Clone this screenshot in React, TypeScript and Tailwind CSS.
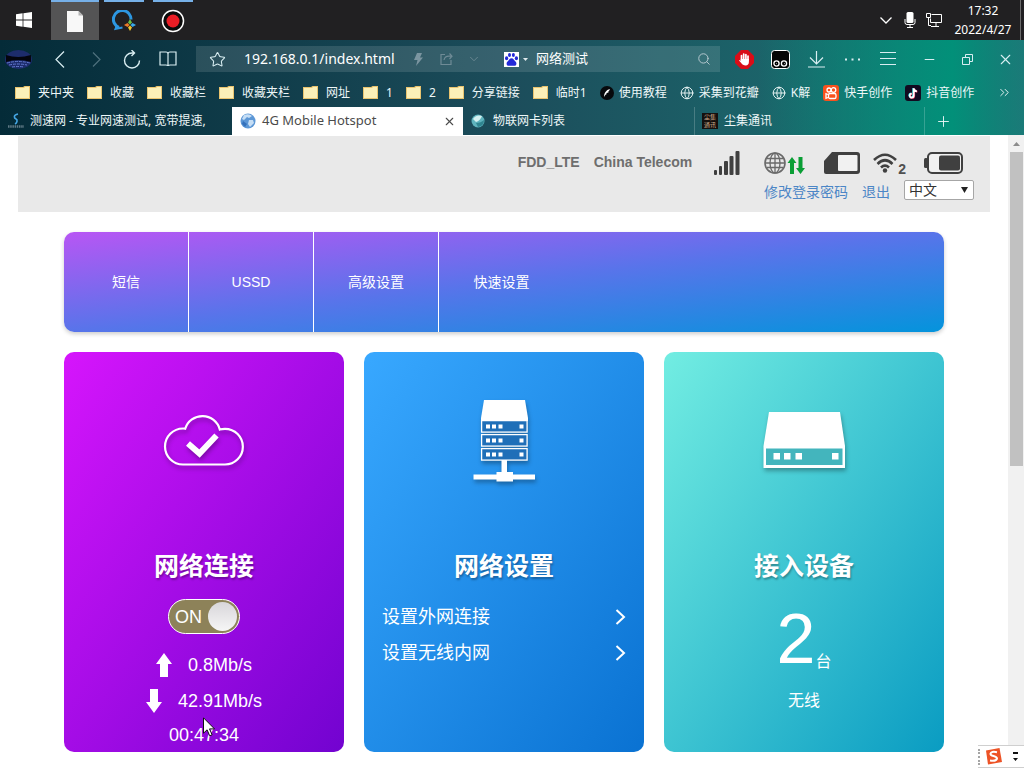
import React, { useState } from "react";
import {
  ChevronDown,
  ChevronsRight,
  Globe,
  Minus,
  Plus,
  Search,
  Star,
  X,
} from "lucide-react";

type Bookmark = {
  label: string;
  icon?: React.ReactNode;
};

const FolderIcon = () => (
  <svg width="15" height="13" viewBox="0 0 15 13">
    <path d="M0 1h8l1.5-1H15v13H0z" fill="#e9c46f" />
    <path d="M1 2h8l1-1h4v11H1z" fill="#fbf0b8" />
  </svg>
);

const TutorialIcon = () => (
  <svg width="14" height="14" viewBox="0 0 14 14">
    <circle cx="7" cy="7" r="7" fill="#07090c" />
    <path d="M4 11c0-4 2-7 6-8l-1 2H8l1 1-2 1H6l1 1c-1 0-2 1-3 3z" fill="#fff" />
  </svg>
);

const KuaishouIcon = () => (
  <svg width="16" height="16" viewBox="0 0 16 16">
    <rect width="16" height="16" rx="3" fill="#f8511d" />
    <g fill="none" stroke="#fff" strokeWidth="1.3">
      <circle cx="6" cy="5" r="2" />
      <circle cx="10.5" cy="5" r="2.3" />
      <rect x="5.5" y="8.5" width="7.5" height="5" rx="1.6" />
      <path d="M5 9.5 3 8.7v4.6l2-.8" />
    </g>
  </svg>
);

const DouyinIcon = () => (
  <svg width="16" height="16" viewBox="0 0 16 16">
    <rect width="16" height="16" rx="3" fill="#120a20" />
    <g fill="none" strokeWidth="1.8">
      <path d="M8.2 3v7.3a2 2 0 1 1-2-2M8.2 3.2c.3 1.8 1.5 2.7 3.2 2.8" stroke="#27e4e8" />
      <path d="M9.2 3.6v7.3a2 2 0 1 1-2-2M9.2 3.8c.3 1.8 1.5 2.7 3.2 2.8" stroke="#f5315c" />
      <path d="M8.7 3.3v7.3a2 2 0 1 1-2-2M8.7 3.5c.3 1.8 1.5 2.7 3.2 2.8" stroke="#fff" />
    </g>
  </svg>
);

// entries without an icon are folders
const bookmarks: Bookmark[] = [
  { label: "夹中夹" },
  { label: "收藏" },
  { label: "收藏栏" },
  { label: "收藏夹栏" },
  { label: "网址" },
  { label: "1" },
  { label: "2" },
  { label: "分享链接" },
  { label: "临时1" },
  { label: "使用教程", icon: <TutorialIcon /> },
  { label: "采集到花瓣", icon: <Globe size={14} strokeWidth={1.6} /> },
  { label: "K解", icon: <Globe size={14} strokeWidth={1.6} /> },
  { label: "快手创作", icon: <KuaishouIcon /> },
  { label: "抖音创作", icon: <DouyinIcon /> },
];

const navItems = ["短信", "USSD", "高级设置", "快速设置"];

/* ---------- desktop task bar ---------- */

const TaskBar = () => (
  <header className="flex h-10 shrink-0 bg-[#212022] text-white">
    <button aria-label="Start" className="flex w-[51px] items-center justify-center pr-[3px]">
      <svg width="16" height="16" viewBox="0 0 16 16" fill="#fff">
        <path d="M0 2.2 6.6 1.3v6.3H0zM7.4 1.2 16 0v7.6H7.4zM0 8.4h6.6v6.3L0 13.8zM7.4 8.4H16V16l-8.6-1.2z" />
      </svg>
    </button>
    <div className="flex gap-px">
      <button aria-label="Document" className="flex w-12 items-center justify-center border-t-2 border-[#76b0e8] bg-[#545455]">
        <svg width="16" height="21" viewBox="0 0 16 21">
          <path d="M0 0h11.5L16 4.500V21H0z" fill="#f8f8f8" />
          <path d="M11.500 0v4.500H16" fill="#b5b5b5" />
        </svg>
      </button>
      <button aria-label="Browser" className="flex w-12 flex-col items-center">
        <span className="h-0.5 w-10 bg-[#76b0e8]" />
        <span className="flex flex-1 items-center">
          <svg width="24" height="22" viewBox="0 0 24 22" fill="none">
            <path d="M7 17.500A8.800 8.800 0 1 1 19 9.500" stroke="#2d97e2" strokeWidth="3" />
            <path d="M5 15l-1.500 4 7-1.500" stroke="#2d97e2" strokeWidth="2" />
            <path d="M18 9l2 3.500-2 2-2-2z" fill="#6ac144" />
            <path d="M24 15l-3.500 2-2-2 2-2z" fill="#39a9ea" />
            <path d="M18 21l-2-3.500 2-2 2 2z" fill="#f5c52a" />
            <path d="M12 15l3.500-2 2 2-2 2z" fill="#ef7b28" />
          </svg>
        </span>
      </button>
      <button aria-label="Recorder" className="flex w-12 flex-col items-center">
        <span className="h-0.5 w-10 bg-[#76b0e8]" />
        <span className="flex flex-1 items-center">
          <svg width="24" height="24" viewBox="0 0 24 24">
            <circle cx="12" cy="12" r="10.500" fill="#0b0b0b" stroke="#fff" strokeWidth="1.500" />
            <circle cx="12" cy="12" r="6.500" fill="#ea1d25" />
          </svg>
        </span>
      </button>
    </div>
    <div className="ml-auto flex items-center">
      <button aria-label="Show hidden icons" className="flex w-6 justify-center">
        <svg width="12" height="7" viewBox="0 0 12 7" fill="none" stroke="#fff" strokeWidth="1.300">
          <path d="M.5.5 6 6l5.500-5.500" />
        </svg>
      </button>
      <button aria-label="Microphone" className="flex w-6 justify-center">
        <svg width="12" height="16" viewBox="0 0 12 16" fill="none" stroke="#fff">
          <rect x="2.500" y="0" width="7" height="11" rx="1.500" fill="#fff" stroke="none" />
          <path d="M1 7v3.500a2 2 0 0 0 2 2h6a2 2 0 0 0 2-2V7M6 13v2.500M3 15.500h6" />
        </svg>
      </button>
      <button aria-label="Network" className="flex w-6 justify-center">
        <svg width="16" height="14" viewBox="0 0 16 14" fill="none" stroke="#fff">
          <path d="M5.500 1.500h10v8h-11v-4M10 10v3M5 13.500h8M.5.500h4v4h-4zM2.500 5v7.500H5" />
        </svg>
      </button>
      <time className="w-[74px] text-center text-xs leading-[19px]">
        17:32
        <br />
        2022/4/27
      </time>
      <span className="mr-[3px] h-10 w-px bg-[#6b6b6b]" />
    </div>
  </header>
);

/* ---------- browser ---------- */

const AddressBar = () => {
  const [url, setUrl] = useState("192.168.0.1/index.html");
  const [keyword, setKeyword] = useState("网络测试");

  return (
    <div className="ml-2.5 flex h-[26px] min-w-0 flex-1 items-center bg-white/12">
      <button aria-label="Bookmark this page" className="flex w-[42px] shrink-0 justify-center">
        <Star size={17} strokeWidth={1.5} />
      </button>
      <input
        aria-label="Address"
        className="ml-1.5 w-[152px] shrink-0 bg-transparent text-sm text-white outline-none"
        value={url}
        onChange={(e) => setUrl(e.target.value)}
      />
      <button aria-label="Speed mode" className="ml-2 flex w-7 shrink-0 justify-center">
        <svg width="9" height="13" viewBox="0 0 9 13" fill="#7b95a0">
          <path d="M3 0h5L6 4.500h3L2 13l1.500-6H0z" />
        </svg>
      </button>
      <button aria-label="Share" className="flex w-7 shrink-0 justify-center">
        <svg width="13" height="12" viewBox="0 0 13 12" fill="none" stroke="#6f8b96" strokeWidth="1.200">
          <path d="M5 1.500H1v10h10V7M4 7c.5-2.500 2-3.800 5-3.800h3M9.500.5 12 3.200 9.500 6" />
        </svg>
      </button>
      <button aria-label="History" className="flex w-7 shrink-0 justify-center text-[#6f8b96]">
        <ChevronDown size={14} strokeWidth={1.5} />
      </button>
      <button aria-label="Search engine" className="ml-4 flex shrink-0 items-center gap-1">
        <svg width="15" height="15" viewBox="0 0 15 15">
          <rect width="15" height="15" fill="#fff" />
          <g fill="#2328d8">
            <ellipse cx="2.600" cy="6.300" rx="1.600" ry="2" />
            <ellipse cx="5.500" cy="3.100" rx="1.500" ry="2" />
            <ellipse cx="9.400" cy="3.100" rx="1.500" ry="2" />
            <ellipse cx="12.400" cy="6.300" rx="1.600" ry="2" />
            <path d="M7.500 6.200c2 0 2.600 2 4 3.400 1.800 1.800.8 4.400-1.400 4.200-1.800-.2-3.400-.2-5.200 0-2.200.2-3.200-2.400-1.400-4.200 1.400-1.400 2-3.400 4-3.400z" />
          </g>
        </svg>
        <svg width="5" height="3" viewBox="0 0 5 3" fill="#dfe9ec">
          <path d="M0 0h5L2.500 3z" />
        </svg>
      </button>
      <input
        aria-label="Search"
        className="ml-2 min-w-0 flex-1 bg-transparent text-[13px] text-white outline-none"
        value={keyword}
        onChange={(e) => setKeyword(e.target.value)}
      />
      <button aria-label="Search" className="flex w-8 shrink-0 justify-center text-[#b4c7ce]">
        <Search size={14} strokeWidth={1.7} />
      </button>
    </div>
  );
};

const ToolBar = () => (
  <div className="flex h-[38px] items-center text-[#d9eef2]">
    <button aria-label="Profile" className="flex w-[42px] shrink-0 pl-[5px]">
      <svg width="27" height="19" viewBox="0 0 27 19">
        <ellipse cx="13.500" cy="9.500" rx="13.500" ry="9.500" fill="#1d2c6c" />
        <path d="M1 5q12 4 25 0v7Q13 8 1 12z" fill="#04050e" />
        <path d="M2 13q11-3 23 0M4 15q9-2 18 0M7 17q6-1 12 0" stroke="#6279cf" fill="none" strokeDasharray="3 1" />
      </svg>
    </button>
    <button aria-label="Back" className="flex w-9 shrink-0 justify-center">
      <svg width="10" height="17" viewBox="0 0 10 17" fill="none" stroke="currentColor" strokeWidth="1.200">
        <path d="M9 .5 1 8.500l8 8" />
      </svg>
    </button>
    <button aria-label="Forward" className="flex w-9 shrink-0 justify-center text-[#4f717d]">
      <svg width="9" height="15" viewBox="0 0 9 15" fill="none" stroke="currentColor" strokeWidth="1.200">
        <path d="M1 .5 8 7.500l-7 7" />
      </svg>
    </button>
    <button aria-label="Reload" className="flex w-9 shrink-0 justify-center">
      <svg width="18" height="19" viewBox="0 0 18 19" fill="none" stroke="currentColor" strokeWidth="1.400">
        <path d="M11 3H9a7.500 7.500 0 1 0 7.500 7.500M8.500 0l3 3-3 3" />
      </svg>
    </button>
    <button aria-label="Reader" className="flex w-9 shrink-0 justify-center">
      <svg width="18" height="16" viewBox="0 0 18 16" fill="none" stroke="currentColor" strokeWidth="1.200">
        <path d="M1 1h6q2 0 2 2v12q0-1-2-1H1zM17 1h-6q-2 0-2 2v12q0-1 2-1h6z" />
      </svg>
    </button>
    <AddressBar />
    <button aria-label="Ad blocker" className="ml-1.5 flex w-9 shrink-0 justify-center">
      <svg width="19" height="19" viewBox="0 0 19 19">
        <path d="M6 0h7l6 6v7l-6 6H6l-6-6V6z" fill="#d90d17" />
        <path
          d="M6.500 10V5.500M8.700 9V4M10.900 9V4.500M13 10V6"
          stroke="#fff"
          strokeWidth="1.700"
          strokeLinecap="round"
        />
        <path d="M5.700 9h8.200v3c0 2-1.200 3.500-3.200 3.500-2.200 0-3.400-1-4.700-2.800L4 10.500q.8-1 2 .5z" fill="#fff" />
      </svg>
    </button>
    <button aria-label="Script manager" className="flex w-9 shrink-0 justify-center">
      <svg width="19" height="19" viewBox="0 0 19 19" fill="none" stroke="#fff">
        <rect x=".5" y=".5" width="18" height="18" rx="3" fill="#050505" />
        <circle cx="5.500" cy="13.500" r="2.600" strokeWidth="1.300" />
        <circle cx="13" cy="13.500" r="2.600" strokeWidth="1.300" />
        <path d="M5.500 13.500h.5M13 13.500h.5" />
      </svg>
    </button>
    <button aria-label="Downloads" className="flex w-9 shrink-0 justify-center">
      <svg width="17" height="17" viewBox="0 0 17 17" fill="none" stroke="currentColor" strokeWidth="1.200">
        <path d="M8.500 0v12.500M2 6.500l6.500 6.500L15 6.500M0 16h17" />
      </svg>
    </button>
    <button aria-label="More" className="flex w-9 shrink-0 justify-center">
      <svg width="15" height="3" viewBox="0 0 15 3" fill="currentColor">
        <path d="M0 .500h2v2H0zM6.500.500h2v2h-2zM13 .500h2v2h-2z" />
      </svg>
    </button>
    <button aria-label="Menu" className="flex w-9 shrink-0 justify-center">
      <svg width="16" height="14" viewBox="0 0 16 14" stroke="currentColor">
        <path d="M0 .5h16M0 6.500h16M0 12.500h16" />
      </svg>
    </button>
    <button aria-label="Minimize" className="ml-1 flex w-[38px] shrink-0 justify-center">
      <Minus size={15} strokeWidth={1.6} />
    </button>
    <button aria-label="Restore" className="flex w-[38px] shrink-0 justify-center">
      <svg width="11" height="11" viewBox="0 0 11 11" fill="none" stroke="currentColor">
        <path d="M.5 3.500h7v7h-7zM3.500 3V.5h7v7H8" />
      </svg>
    </button>
    <button aria-label="Close" className="flex w-[38px] shrink-0 justify-center">
      <X size={17} strokeWidth={1.5} />
    </button>
  </div>
);

const BookmarkBar = () => (
  <nav className="flex h-[29px] items-center gap-[13px] pl-[15px] pr-3 text-xs text-[#eef7f8]">
    {bookmarks.map((item) => (
      <a
        key={item.label}
        href="#"
        className={"flex shrink-0 items-center whitespace-nowrap " + (item.icon ? "gap-[5px]" : "gap-2")}
      >
        {item.icon ?? <FolderIcon />}
        {item.label}
      </a>
    ))}
    <button aria-label="More bookmarks" className="ml-auto">
      <ChevronsRight size={15} strokeWidth={1.5} />
    </button>
  </nav>
);

const TabBar = () => (
  <div className="flex h-7 text-xs text-[#eef7f8]">
    <button className="flex w-[232px] items-center gap-1.5 pl-2">
      <svg width="16" height="16" viewBox="0 0 16 16" fill="none">
        <path d="M10 1C5 2 6 5 8 6s1 4-1 5" stroke="#45a6e4" strokeWidth="1.600" />
        <path d="M0 13.500h16" stroke="#607a86" strokeWidth="2.500" strokeDasharray="1.500 .7" />
      </svg>
      <span className="w-[180px] truncate text-left text-clip">测速网 - 专业网速测试, 宽带提速,</span>
    </button>
    <div className="flex w-[231px] items-center bg-white pl-2 pr-[7px] text-[#4b4b4b]">
      <button className="flex flex-1 items-center gap-1.5">
        <svg width="16" height="16" viewBox="0 0 16 16">
          <circle cx="8" cy="8" r="7.500" fill="#5c97d6" />
          <path d="M4 2q5-2 8 1l-3 2-2-1-3 3-2-1zM9 7l4 0 1 3-4 4-2-3z" fill="#c6def5" />
          <path d="M3 8l4 3-2 3-3-3z" fill="#3471bb" />
        </svg>
        <span className="text-[13px]">4G Mobile Hotspot</span>
      </button>
      <button aria-label="Close tab">
        <X size={13} strokeWidth={2} />
      </button>
    </div>
    <button className="flex w-[231px] items-center gap-2 pl-2">
      <svg width="14" height="14" viewBox="0 0 14 14">
        <circle cx="7" cy="7" r="6.500" fill="#5eb3bd" />
        <path d="M2 5q3-5 9-3Q9 7 5 8z" fill="#d5f1f1" />
        <path d="M5 9q5 0 8-3 0 6-6 7z" fill="#2f8590" />
      </svg>
      物联网卡列表
    </button>
    <button className="flex w-[231px] items-center gap-1.5 border-x border-white/20 pl-[7px]">
      <span className="w-4 bg-[#15100e] text-center text-[6px] leading-2 text-[#cfae8d]">
        尘集
        <br />
        通讯
      </span>
      尘集通讯
    </button>
    <button aria-label="New tab" className="flex w-9 items-center justify-center">
      <Plus size={17} strokeWidth={1.3} />
    </button>
  </div>
);

/* ---------- router admin page ---------- */

const StatusHeader = () => (
  <div className="mx-[18px] mt-px flex h-[76px] flex-col items-end bg-[#e9e9e9] pr-4 pt-3.5">
    <div className="flex h-[26px] items-center pr-[11px] text-sm font-bold text-[#6e6e6e]">
      <span className="pb-0.5">FDD_LTE</span>
      <span className="ml-3.5 pb-0.5">China Telecom</span>
      <svg className="ml-[22px]" width="26" height="24" viewBox="0 0 26 24" fill="#404040">
        <rect x="0" y="19" width="3" height="5" rx="1" />
        <rect x="5" y="15" width="3" height="9" rx="1" />
        <rect x="10" y="10" width="4" height="14" rx="1" />
        <rect x="15.500" y="5" width="4" height="19" rx="1" />
        <rect x="21.500" y="0" width="4" height="24" rx="1" />
      </svg>
      <svg className="ml-6" width="41" height="24" viewBox="0 0 41 24">
        <g fill="none" stroke="#6a6a6a" strokeWidth="1.300">
          <circle cx="11" cy="12" r="10" strokeWidth="1.600" />
          <ellipse cx="11" cy="12" rx="5" ry="10" />
          <path d="M11 2v20M1 12h20M2.500 7.500h17M2.500 16.500h17" />
        </g>
        <g fill="#0a9e35">
          <path d="M28 6l4.500 6H30v11h-4V12h-2.500zM36.500 23l4.500-6h-2.500V6h-4v11H32z" />
        </g>
      </svg>
      <svg className="ml-[19px]" width="36" height="22" viewBox="0 0 36 22">
        <path d="M8 0h25a3 3 0 0 1 3 3v16a3 3 0 0 1-3 3H2a2 2 0 0 1-2-2V9z" fill="#404040" />
        <rect x="14" y="3" width="19.500" height="16" rx="1" fill="#f1f1f1" />
      </svg>
      <svg className="ml-3" width="26" height="20" viewBox="0 0 24 20" fill="none" stroke="#404040" strokeWidth="2.600">
        <path d="M1 7Q12-3.500 23 7M4.500 11Q12 3.500 19.500 11M8 14.500q4-3.800 8 0" />
        <circle cx="12" cy="17.500" r="2.200" fill="#404040" stroke="none" />
      </svg>
      <span className="pt-3 text-sm text-[#505050]">2</span>
      <svg className="ml-[18px]" width="39" height="22" viewBox="0 0 39 22">
        <rect x="0" y="6" width="4" height="10" rx="1.500" fill="#404040" />
        <rect x="4" y="1" width="34" height="20" rx="4" fill="#f1f1f1" stroke="#404040" strokeWidth="2" />
        <rect x="15" y="3.500" width="21" height="15" rx="2" fill="#404040" />
      </svg>
    </div>
    <div className="mt-1 flex h-5 items-center text-sm text-[#4c86c6]">
      <a href="#" className="mr-3.5 pt-1">修改登录密码</a>
      <a href="#" className="mr-3.5 pt-1">退出</a>
      <span className="relative">
        <select
          aria-label="语言"
          className="block h-5 w-[70px] appearance-none rounded-xs border border-[#a6a6a6] bg-white pl-1 text-sm leading-[18px] text-[#333]"
          defaultValue="zh"
        >
          <option value="zh">中文</option>
          <option value="en">English</option>
        </select>
        <svg className="pointer-events-none absolute right-1.5 top-[7px]" width="7" height="6" viewBox="0 0 7 6">
          <path d="M0 0h7L3.500 6z" fill="#222" />
        </svg>
      </span>
    </div>
  </div>
);

type CardProps = {
  title: string;
  className: string;
  icon: React.ReactNode;
  children: React.ReactNode;
};

const Card = ({ title, className, icon, children }: CardProps) => (
  <section className={"min-h-[400px] rounded-[10px] text-white " + className}>
    <div className="flex h-[196px] items-start justify-center pt-[38px] drop-shadow-[1px_3px_2px_rgba(0,0,0,0.3)]">{icon}</div>
    <h2 className="text-center text-[25px] font-bold leading-9 [text-shadow:1px_2px_2px_rgba(0,0,0,0.3)]">{title}</h2>
    {children}
  </section>
);

const CloudIcon = () => (
  <svg width="100" height="100" viewBox="0 0 100 100" fill="none" stroke="#fff">
    <path
      d="M29 74.500a17.500 17.500 0 0 1 0-36q1 0 2.200.2a18 18 0 0 1 34.600.8q2.200-.7 5.200-.7a17.800 17.800 0 0 1 0 35.700z"
      strokeWidth="2.200"
    />
    <path d="M34 53.500l11.500 10L62.500 45.500" strokeWidth="6" />
  </svg>
);

const serverRows = [41, 55, 69];

const ServerIcon = () => (
  <svg width="100" height="100" viewBox="0 0 100 100" fill="#fff">
    <path d="M30 10h41l3 18v3H27v-3z" />
    {serverRows.map((y) => (
      <g key={y} transform={`translate(27 ${y - 11})`}>
        <rect x=".6" y=".6" width="45.500" height="11.500" fill="#1f6fb8" stroke="#fff" strokeWidth="1.300" />
        <path d="M5 4.500h4v4H5zM11 4.500h4v4h-4zM17.500 4.500h4v4h-4zM38.500 4.500h4v4h-4z" />
      </g>
    ))}
    <path d="M47.500 70h5.500v12h6v2.500h22v5H59v2H42.500v-2H19.500v-5h23V82h5z" />
  </svg>
);

const DeviceIcon = () => (
  <svg width="100" height="100" viewBox="0 0 100 100" fill="#fff">
    <path d="M15 22h71l5 34v22H9.500V56z" />
    <path d="M12 58.500h76.500V75H12z" fill="#43b5bd" />
    <path d="M19.500 63h6.500v6.500h-6.500zM30 63h6.500v6.500H30zM41.500 63H48v6.500h-6.500zM78 63h6.500v6.500H78z" />
  </svg>
);

const RateArrow = ({ down }: { down?: boolean }) => (
  <svg width="16" height="24" viewBox="0 0 16 24" fill="#fff" className={down ? "rotate-180" : ""}>
    <path d="M8 0l8 11h-4v13H4V11H0z" />
  </svg>
);

const AdminPage = () => {
  const [connected, setConnected] = useState(true);

  return (
    <main className="min-w-0 flex-1 font-['Liberation_Sans','Noto_Sans_CJK_SC',sans-serif]">
      <StatusHeader />
      <div className="mx-auto mt-5 max-w-[880px] pb-4">
        <nav className="flex h-[100px] rounded-[10px] bg-linear-to-br/srgb from-[#b856f4] via-[#5874ea] to-[#0494dc] text-sm text-white shadow-[0_2px_4px_rgba(0,0,0,0.2)]">
          {navItems.map((item, i) => (
            <a
              key={item}
              href="#"
              className={
                "flex items-center justify-center " +
                (i < navItems.length - 1 ? "w-[125px] border-r border-white" : "w-[125px]")
              }
            >
              {item}
            </a>
          ))}
        </nav>

        <div className="mt-5 grid grid-cols-3 gap-5">
          <Card title="网络连接" className="bg-linear-to-br/srgb from-[#d615fc] to-[#7203d0]" icon={<CloudIcon />}>
            <label className="mx-auto mt-[15px] flex h-[35px] w-[72px] cursor-pointer items-center justify-between rounded-full border border-white bg-[#8d8259] pl-1.5 pr-0.5 text-lg">
              <input
                type="checkbox"
                className="sr-only"
                checked={connected}
                onChange={(e) => setConnected(e.target.checked)}
              />
              {connected ? "ON" : "OFF"}
              <span className="size-[29px] rounded-full bg-linear-to-b from-[#d8d6da] to-[#f6f6f6]" />
            </label>
            <div className="mt-[13px] text-lg">
              <p className="flex h-9 items-center justify-center gap-4">
                <RateArrow />
                0.8Mb/s
              </p>
              <p className="flex h-9 items-center justify-center gap-4">
                <RateArrow down />
                42.91Mb/s
              </p>
              <p className="relative flex h-8 items-center justify-center">
                00:47:34
                <svg className="absolute left-[139px] top-[-2px]" width="13" height="20" viewBox="0 0 13 20">
                  <path d="M.5.8v15.400l3.600-3.400 2.600 6 2.400-1-2.600-5.900h5z" fill="#fff" stroke="#111" />
                </svg>
              </p>
            </div>
          </Card>

          <Card title="网络设置" className="bg-linear-to-br/srgb from-[#38a8ff] to-[#0a72d2]" icon={<ServerIcon />}>
            <ul className="mt-[15px] px-[18px] text-lg">
              {["设置外网连接", "设置无线内网"].map((item) => (
                <li key={item}>
                  <a href="#" className="flex h-9 items-center justify-between">
                    {item}
                    <svg width="11" height="16" viewBox="0 0 11 16" fill="none" stroke="#fff" strokeWidth="2">
                      <path d="M1.500 1 9 8l-7.500 7" />
                    </svg>
                  </a>
                </li>
              ))}
            </ul>
          </Card>

          <Card title="接入设备" className="bg-linear-to-br/srgb from-[#72ede2] to-[#0a9cc2]" icon={<DeviceIcon />}>
            <p className="mt-[15px] h-20 text-center text-[70px] leading-[80px]">
              2<span className="align-[-4px] text-base leading-none">台</span>
            </p>
            <p className="mt-1 text-center text-base leading-9">无线</p>
          </Card>
        </div>
      </div>
    </main>
  );
};

const ScrollBar = () => (
  <div className="flex w-4 shrink-0 flex-col items-center bg-[#f1f1f1]">
    <span className="flex h-[17px] items-center">
      <svg width="7" height="4" viewBox="0 0 7 4">
        <path d="M0 4h7L3.500 0z" fill="#8c8c8c" />
      </svg>
    </span>
    <span className="h-[314px] w-[13px] bg-[#c1c1c1]" />
  </div>
);

// input method bar, floats over the bottom right corner
const ImeBar = () => (
  <div className="absolute bottom-0 right-0 flex h-[23px] w-[46px] items-center border-y border-[#cfcfcf] bg-white">
    <span className="h-4 border-l-2 border-dotted border-[#a5a5a5]" />
    <svg className="ml-[5px]" width="17" height="17" viewBox="0 0 17 17">
      <path d="M1 2.500 14.500 0 17 14 3 16.500z" fill="#ed5326" />
      <path d="M12 4.200Q6 3 5.500 5.800C5.200 8.500 12 7.500 12 10.500q-.5 3-7 2" fill="none" stroke="#fff" strokeWidth="2" />
    </svg>
    <svg className="ml-[11px]" width="5" height="10" viewBox="0 0 5 10">
      <path d="M0 0h5v2H0zM0 6h5L2.500 9z" fill="#111" />
    </svg>
  </div>
);

export default function App() {
  return (
    <div className="relative flex min-h-screen flex-col overflow-hidden bg-white font-['Noto_Sans','Noto_Sans_CJK_SC',sans-serif]">
      <TaskBar />
      <div className="bg-linear-to-r/srgb from-[#042b38] via-[#1c4d5b] via-50% to-[#1b7a78]">
        <div className="bg-linear-to-r from-transparent from-74% via-[#029079] via-93% to-transparent">
          <ToolBar />
          <BookmarkBar />
          <TabBar />
        </div>
      </div>
      <div className="flex flex-1">
        <AdminPage />
        <ScrollBar />
      </div>
      <ImeBar />
    </div>
  );
}
